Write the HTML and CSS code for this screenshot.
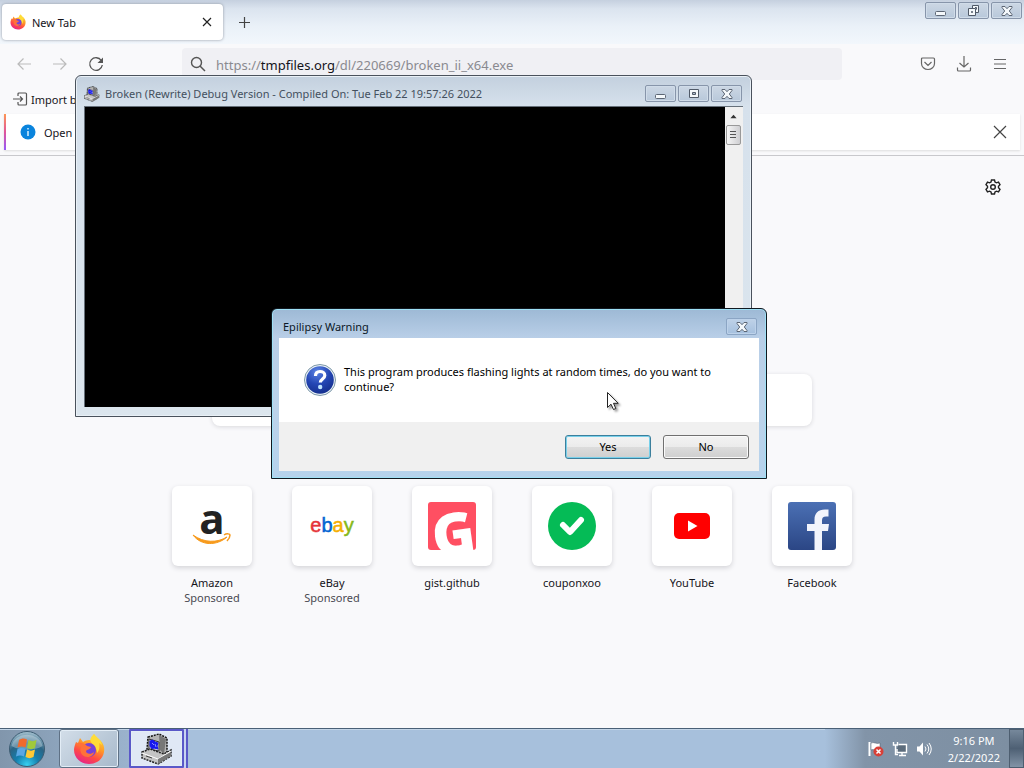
FILE: index.html
```html
<!DOCTYPE html>
<html lang="en">
<head>
<meta charset="utf-8">
<title>New Tab</title>
<link rel="stylesheet" href="styles.css">
</head>
<body>
<svg class="defs" aria-hidden="true">
  <defs>
    <linearGradient id="fox" x1="0.8" y1="0" x2="0.3" y2="1"><stop offset="0" stop-color="#ffe03a"/><stop offset=".4" stop-color="#ff9a28"/><stop offset=".7" stop-color="#ff4a45"/><stop offset="1" stop-color="#e5238b"/></linearGradient>
    <linearGradient id="blue" x1="0" y1="0" x2="0" y2="1"><stop offset="0" stop-color="#4b70b4"/><stop offset="1" stop-color="#2b4685"/></linearGradient>
    <radialGradient id="orb" cx=".5" cy=".95" r=".95"><stop offset="0" stop-color="#38d0f0"/><stop offset=".35" stop-color="#147fae"/><stop offset=".65" stop-color="#2b6484"/><stop offset="1" stop-color="#a8c4d2"/></radialGradient>
    <radialGradient id="ask" cx=".4" cy=".2" r=".9"><stop offset="0" stop-color="#5c84e4"/><stop offset=".5" stop-color="#2446b4"/><stop offset="1" stop-color="#122a86"/></radialGradient>
    <symbol id="firefox" viewBox="0 0 32 32">
      <path d="M3 9l2 1 2-5 3 4c3-2 6-2 8-2l3-6c2 2 2 4 3 5l3 1c3 3 5 7 4 12-1 7-7 12-15 12S1 25 1 17c0-3 1-5 2-8z" fill="url(#fox)"/>
      <path d="M21 1c3 4 7 5 8 11l-3-2c1 5 0 8-2 10 0-6-4-7-6-11-2-3 1-6 3-8z" fill="#ffdc38"/>
      <circle cx="16" cy="17" r="7" fill="#7542d9"/>
      <path d="M5 10c4-1 7 1 9 3l4 1c-1 3-4 2-5 4 0 3 5 4 8 1-1 6-10 7-13 1-1-3-1-5 1-7-2 0-3 0-4-3z" fill="#ff7139"/>
    </symbol>
    <symbol id="computer" viewBox="0 0 32 32">
      <path d="M7 4l11-3 8 4v14l-3 3-14-2-3-4z" fill="#b4b4b4" stroke="#111" stroke-width="1.500" stroke-dasharray="2 1"/>
      <path d="M18 2l7 4-2 15-4-4z" fill="#777"/>
      <path d="M8 6l10 3v9L8 16z" fill="#d8d8ea" stroke="#333"/>
      <path d="M9 8l3-1 2 2 3 1-1 3 1 3-4-1-2 1-2-3z" fill="#1818ee" stroke="#1818ee"/>
      <path d="M11 10l2 2m1-1l1 3" stroke="#8890ff"/>
      <path d="M1 19l8-3 14 5 7-4v6L17 31 1 25z" fill="#c4c4c4" stroke="#222" stroke-width="1.500" stroke-dasharray="2 1"/>
      <path d="M1 20l16 6 13-8" fill="none" stroke="#fff"/>
      <path d="M17 26v5l13-8v-4z" fill="#777"/>
      <path d="M5 23l6 2" stroke="#444"/>
    </symbol>
    <symbol id="cap-min" viewBox="0 0 14 12"><rect x="1.500" y="6.500" width="10" height="4" rx="1" fill="#f4f8fb" stroke="#5c6674"/></symbol>
    <symbol id="cap-max" viewBox="0 0 14 12"><path d="M2.500 1.500h9v8h-9z" fill="#f4f8fb" stroke="#505a68"/><path d="M5.500 4.500h3v2h-3z" fill="#aebccd" stroke="#505a68"/></symbol>
    <symbol id="cap-restore" viewBox="0 0 14 12"><path d="M5.500.5h6v7h-6z" fill="#f4f8fb" stroke="#505a68"/><path d="M1.500 3.500h7v7h-7z" fill="#f4f8fb" stroke="#505a68"/><path d="M4.500 6.500h1v1h-1z" fill="none" stroke="#505a68"/><path d="M8 2.500h1.500v2" fill="none" stroke="#505a68"/></symbol>
    <symbol id="cap-close" viewBox="0 0 14 12"><path d="M2 1.500h3l2 2.200 2-2.200h3v1L9.300 6l2.700 3.500v1H9L7 8.300 5 10.500H2v-1L4.700 6 2 2.500z" fill="#f4f8fb" stroke="#5c6674"/></symbol>
    <symbol id="cross" viewBox="0 0 16 16"><path d="M2 2l12 12M14 2L2 14" fill="none" stroke="currentColor" stroke-width="1.200"/></symbol>
    <symbol id="tab-cross" viewBox="0 0 10 10"><path d="M1 1l8 8M9 1L1 9" fill="none" stroke="#222" stroke-width="1.200"/></symbol>
  </defs>
</svg>

<main class="browser">
  <header class="tabstrip">
    <div class="tab">
      <svg class="i16"><use href="#firefox"/></svg>
      <span class="tab-title">New Tab</span>
      <button class="plain" aria-label="Close tab"><svg class="i10"><use href="#tab-cross"/></svg></button>
    </div>
    <button class="plain" aria-label="Open a new tab"><svg class="i13" viewBox="0 0 13 13"><path d="M6.500 1v11M1 6.500h11" stroke="#444" stroke-width="1.200"/></svg></button>
    <div class="captions">
      <button class="cap" aria-label="Minimize"><svg><use href="#cap-min"/></svg></button>
      <button class="cap" aria-label="Restore"><svg><use href="#cap-restore"/></svg></button>
      <button class="cap" aria-label="Close"><svg><use href="#cap-close"/></svg></button>
    </div>
  </header>

  <nav class="toolbar">
    <button class="plain dim" aria-label="Back"><svg class="i16" viewBox="0 0 16 16"><path d="M15 8H2M7.500 2.500L2 8l5.500 5.500" fill="none" stroke="currentColor" stroke-width="1.200"/></svg></button>
    <button class="plain dim" aria-label="Forward"><svg class="i16" viewBox="0 0 16 16"><path d="M1 8h13M8.500 2.500L14 8l-5.500 5.500" fill="none" stroke="currentColor" stroke-width="1.200"/></svg></button>
    <button class="plain" aria-label="Reload"><svg class="i16" viewBox="0 0 16 16"><path d="M13.300 4.500A6.300 6.300 0 1 0 14.300 9" fill="none" stroke="#555" stroke-width="1.300"/><path d="M15 1.500v5.500H9.500z" fill="#555"/></svg></button>
    <div class="urlbar">
      <svg class="i16" viewBox="0 0 16 16"><circle cx="6.500" cy="6.500" r="5" fill="none" stroke="#555" stroke-width="1.400"/><path d="M10 10l5 5" stroke="#555" stroke-width="1.500"/></svg>
      <span class="url">https://<b>tmpfiles.org</b>/dl/220669/broken_ii_x64.exe</span>
    </div>
    <div class="tools">
      <button class="plain" aria-label="Pocket"><svg class="i16" viewBox="0 0 16 16"><path d="M2.500 2h11c.7 0 1 .4 1 1v4.500a6.500 6 0 0 1-13 0V3c0-.6.300-1 1-1zM4.500 6L8 9.500 11.500 6" fill="none" stroke="#666" stroke-width="1.200"/></svg></button>
      <button class="plain" aria-label="Downloads"><svg class="i16" viewBox="0 0 16 16"><path d="M8 0v11M3.500 7L8 11l4.500-4M1.500 11.500V14c0 .6.400 1 1 1h11c.6 0 1-.4 1-1v-2.500" fill="none" stroke="#666" stroke-width="1.200"/></svg></button>
      <button class="plain" aria-label="Menu"><svg class="i16" viewBox="0 0 16 16"><path d="M2 3.500h12M2 8h12M2 12.500h12" stroke="#666" stroke-width="1.200"/></svg></button>
    </div>
  </nav>

  <div class="bookmarks">
    <svg class="i16" viewBox="0 0 16 16"><path d="M6 5V3c0-.6.400-1 1-1h6.500c.6 0 1 .4 1 1v10c0 .6-.4 1-1 1H7c-.6 0-1-.4-1-1v-2M1 8h9.500M8 5.500L10.500 8 8 10.500" fill="none" stroke="#555" stroke-width="1.200"/></svg>
    <a class="bookmark" href="#">Import b</a>
  </div>

  <div class="notice">
    <svg class="i16" viewBox="0 0 16 16"><circle cx="8" cy="8" r="7.500" fill="#0a84dd"/><path d="M8 4v1.500M8 7v5" stroke="#d8f0ff" stroke-width="1.500"/></svg>
    <span class="notice-text">Open</span>
    <button class="plain" aria-label="Close notification"><svg class="i16"><use href="#cross"/></svg></button>
  </div>

  <section class="page">
    <button class="plain gear" aria-label="Personalize new tab"><svg class="i16" viewBox="0 0 16 16"><path d="M6.500 1h3l.5 2 1.500.8 2-.7 1.500 2.600L13.500 7.200v1.600L15 10.300l-1.500 2.600-2-.7-1.500.8-.5 2h-3L6 13l-1.500-.8-2 .7L1 10.300l1.500-1.500V7.200L1 5.700l1.500-2.600 2 .7L6 3z" fill="none" stroke="#222" stroke-width="1.400"/><circle cx="8" cy="8" r="2.300" fill="none" stroke="#222" stroke-width="1.400"/></svg></button>
    <input class="search" type="search" aria-label="Search the web">
    <div class="tiles">
      <a class="tile" href="#"><span class="card"><svg class="i48" viewBox="0 0 48 48"><text x="24" y="32" class="amazon">a</text><path d="M5 33c11 8 24 8 34 2-10 9-26 9-34-2z" fill="#f79a1c" stroke="#f79a1c"/><path d="M36 33c3-2 6-1 6 0s-1 4-3 6" fill="none" stroke="#f79a1c" stroke-width="1.500"/></svg></span><span>Amazon</span><small>Sponsored</small></a>
      <a class="tile" href="#"><span class="card"><svg class="i48" viewBox="0 0 48 48"><text x="24" y="30" class="ebay"><tspan class="e">e</tspan><tspan class="b">b</tspan><tspan class="a">a</tspan><tspan class="y">y</tspan></text></svg></span><span>eBay</span><small>Sponsored</small></a>
      <a class="tile" href="#"><span class="card"><svg class="i48" viewBox="0 0 48 48"><rect width="48" height="48" rx="3" fill="#ff4f62"/><text x="25" y="53" class="gist" transform="rotate(-8 24 30)">G</text></svg></span><span>gist.github</span></a>
      <a class="tile" href="#"><span class="card"><svg class="i48" viewBox="0 0 48 48"><circle cx="24" cy="24" r="24" fill="#05bb56"/><path d="M15 23l7 7 11-12" fill="none" stroke="#fff" stroke-width="6" stroke-linecap="round" stroke-linejoin="round"/></svg></span><span>couponxoo</span></a>
      <a class="tile" href="#"><span class="card"><svg class="i48" viewBox="0 0 48 48"><rect x="6" y="11" width="36" height="26" rx="5" fill="#f00"/><path d="M20 18.500v11l9.500-5.500z" fill="#fff"/></svg></span><span>YouTube</span></a>
      <a class="tile" href="#"><span class="card"><svg class="i48" viewBox="0 0 48 48"><rect width="48" height="48" rx="3" fill="url(#blue)"/><path d="M40.500 7.500H37c-7 0-10.500 4-10.500 10V22H19v7h7.500v19H34V29h6l1-7h-7v-3.500c0-2.500 1-4 4-4h2.500z" fill="#f2f4fc"/></svg></span><span>Facebook</span></a>
    </div>
  </section>
</main>

<section class="window console" aria-label="Console">
  <header class="titlebar">
    <svg class="i16"><use href="#computer"/></svg>
    <h1>Broken (Rewrite) Debug Version - Compiled On: Tue Feb 22 19:57:26 2022</h1>
    <div class="captions">
      <button class="cap" aria-label="Minimize"><svg><use href="#cap-min"/></svg></button>
      <button class="cap" aria-label="Maximize"><svg><use href="#cap-max"/></svg></button>
      <button class="cap" aria-label="Close"><svg><use href="#cap-close"/></svg></button>
    </div>
  </header>
  <div class="terminal">
    <div class="scrollbar">
      <svg class="arrow" viewBox="0 0 17 17"><path d="M5 11l3.500-4 3.500 4z" fill="#333"/></svg>
      <div class="thumb"><svg viewBox="0 0 9 10"><path d="M1 1.500h6M1 4.500h6M1 7.500h6" stroke="#555"/></svg></div>
    </div>
  </div>
</section>

<section class="window dialog" role="dialog" aria-labelledby="dialog-title">
  <header class="titlebar">
    <h1 id="dialog-title">Epilipsy Warning</h1>
    <button class="cap" aria-label="Close"><svg><use href="#cap-close"/></svg></button>
  </header>
  <div class="message">
    <svg class="i32" viewBox="0 0 32 32"><circle cx="16" cy="16" r="15.500" fill="#e8f0f5" stroke="#7d97a9"/><circle cx="16" cy="16" r="13.800" fill="url(#ask)"/><path d="M11.500 12c0-3 2-4.500 4.500-4.500s4.800 1.500 4.800 4c0 3.500-4.500 3.500-4.500 7" fill="none" stroke="#fff" stroke-width="3.200"/><circle cx="16.200" cy="23" r="2.200" fill="#bfe4ff"/></svg>
    <p>This program produces flashing lights at random times, do you want to continue?</p>
  </div>
  <footer class="actions">
    <button class="push default">Yes</button>
    <button class="push">No</button>
  </footer>
</section>

<svg class="cursor" viewBox="0 0 14 20" aria-hidden="true"><path d="M1.500 1.500v15l3.500-3.300 2.500 5.300 2.300-1-2.300-5.200h4.700z" fill="#fff" stroke="#222"/></svg>

<footer class="taskbar">
  <button class="start" aria-label="Start"><svg viewBox="0 0 38 38"><circle cx="19" cy="19" r="17.500" fill="url(#orb)" stroke="#3d5c72"/><path d="M3.500 16a16 15 0 0 1 31 0c-8 5-22 5-31 0z" fill="#fff" opacity=".3"/><path d="M11 10c3-2 5-2 8-.5l-1.500 8c-3-1.500-5-1.500-8 0z" fill="#ef6a2d"/><path d="M20.500 10c3 1.500 5 1.500 8 0l-1.500 8c-3 1.500-5 1.500-8 0z" fill="#a0c93c"/><path d="M9.500 19c3-1.500 5-1.500 8 0L16 26.500c-3-1.500-5-1.500-8 0z" fill="#5aa7e4"/><path d="M19 19.500c3 1.500 5 1.500 8 0L25.500 27c-3 1.500-5 1.500-8 0z" fill="#fdc936"/></svg></button>
  <button class="task" aria-label="Firefox"><svg class="i32"><use href="#firefox"/></svg></button>
  <div class="group"><button class="task attention" aria-label="Console"><svg class="i32"><use href="#computer"/></svg></button></div>
  <div class="tray">
    <svg class="i16" viewBox="0 0 16 16"><path d="M1.500 1v14" stroke="#fff" stroke-width="2"/><path d="M3 2c3-1.500 5 1.500 9 0v7c-4 1.500-6-1.500-9 0z" fill="#fff" stroke="#4a5a6a" stroke-width=".5"/><circle cx="10.500" cy="10.500" r="5" fill="#d84038"/><path d="M8.500 8.500l4 4m0-4l-4 4" stroke="#fff" stroke-width="1.500"/></svg>
    <svg class="i16" viewBox="0 0 16 16"><path d="M6.500 3.500h8v8H5V8" fill="#5c6c7c" stroke="#fff" stroke-width="1.400"/><path d="M7 14.500h7M10 12v2M1.500 1v3h4V1M3.500 4v9.500H6" fill="none" stroke="#fff" stroke-width="1.400"/></svg>
    <svg class="i16" viewBox="0 0 16 16"><path d="M1 5.500h2.500L7 1.500v13l-3.500-4H1z" fill="#fff"/><path d="M9 5.500q2 2.500 0 5M11 3.500q3.500 4.500 0 9M13 2q4.500 6 0 12" fill="none" stroke="#fff"/></svg>
    <time class="clock"><span>9:16 PM</span><span>2/22/2022</span></time>
  </div>
  <button class="peek" aria-label="Show desktop"></button>
</footer>
</body>
</html>
```
FILE: styles.css
```css
* { box-sizing: border-box; }

body {
  margin: 0;
  height: 100vh;
  display: flex;
  flex-direction: column;
  overflow: hidden;
  position: relative;
  font: 12px/15px "Noto Sans", "Open Sans", sans-serif;
  color: #15141a;
  background: #f9f9fb;
}

.defs { position: absolute; width: 0; height: 0; }
svg { display: block; flex: none; }
.i10 { width: 10px; height: 10px; }
.i13 { width: 13px; height: 13px; }
.i16 { width: 16px; height: 16px; }
.i32 { width: 32px; height: 32px; }
.i48 { width: 48px; height: 48px; overflow: visible; }

button { font: inherit; color: inherit; }
.plain { padding: 0; border: 0; background: none; color: #444; }
.dim { color: #bbb; }
a { color: inherit; text-decoration: none; }
h1, p { margin: 0; font: inherit; }

.browser { flex: 1; display: flex; flex-direction: column; min-height: 0; }

.tabstrip {
  display: flex;
  align-items: center;
  gap: 15px;
  height: 44px;
  padding: 0 2px;
  background: linear-gradient(#c5d0df, #dbe4ef 20%, #eaf1f8 60%, #f2f7fc);
}
.tab {
  display: flex;
  align-items: center;
  gap: 6px;
  width: 221px;
  height: 36px;
  padding: 0 11px 0 8px;
  border-radius: 4px;
  background: #fff;
  box-shadow: 0 0 3px #8d94a0;
}
.tab-title { flex: 1; font-size: 11px; }

.captions { display: flex; gap: 2px; margin-left: auto; }
.tabstrip .captions { align-self: flex-start; padding-top: 2px; }
.cap {
  display: grid;
  place-items: center;
  width: 31px;
  height: 17px;
  padding: 0;
  border: 1px solid #8795aa;
  border-radius: 2px;
  background: linear-gradient(#ccd7e4, #b8c8da);
  box-shadow: inset 0 0 0 1px #d0dce9;
}
.cap svg { width: 14px; height: 12px; }

.toolbar {
  display: flex;
  align-items: center;
  gap: 20px;
  height: 40px;
  padding: 0 16px;
}
.urlbar {
  flex: 1;
  display: flex;
  align-items: center;
  gap: 10px;
  height: 32px;
  max-width: 660px;
  margin-left: 58px;
  padding-left: 8px;
  border-radius: 4px;
  background: #f0f0f4;
}
.url { padding-top: 2px; font-size: 13px; line-height: 20px; color: #8a8a90; }
.url b { font-weight: 400; color: #15141a; }
.tools { display: flex; gap: 20px; margin-left: auto; }

.bookmarks { display: flex; align-items: center; gap: 3px; height: 30px; padding-left: 12px; font-size: 11px; }
.bookmark { white-space: nowrap; }

.notice {
  display: flex;
  align-items: center;
  gap: 8px;
  height: 36px;
  margin: 0 4px;
  padding: 0 12px 0 14px;
  border-left: 2px solid;
  border-image: linear-gradient(#ff9a50, #e0559a, #9059ff) 1;
  background: #fff;
  box-shadow: 0 1px 2px #ddd;
  font-size: 11px;
}
.notice-text { flex: 1; }

.page {
  flex: 1;
  display: flex;
  flex-direction: column;
  align-items: center;
  margin-top: 5px;
  border-top: 1px solid #c8c8cc;
}
.gear { align-self: flex-end; margin: 23px 23px 0 0; }
.search {
  width: 600px;
  max-width: 90%;
  height: 52px;
  margin-top: 179px;
  border: 0;
  border-radius: 8px;
  background: #fff;
  box-shadow: 0 1px 4px #d8d8dc;
}
.tiles { display: flex; gap: 40px; margin-top: 60px; }
.tile { display: flex; flex-direction: column; align-items: center; width: 80px; font-size: 11px; }
.card {
  display: grid;
  place-items: center;
  width: 80px;
  height: 80px;
  margin-bottom: 9px;
  border-radius: 6px;
  background: #fff;
  box-shadow: 0 2px 5px #d4d4d8;
}
.tile small { font-size: 11px; color: #4a4a52; }
.amazon { font: 700 42px "Open Sans", sans-serif; text-anchor: middle; fill: #222; }
.ebay { font: 20px "Liberation Sans", sans-serif; text-anchor: middle; stroke-width: 0.5px; }
.ebay .e { fill: #e53238; stroke: #e53238; }
.ebay .b { fill: #0064d2; stroke: #0064d2; }
.ebay .a { fill: #f5af02; stroke: #f5af02; }
.ebay .y { fill: #86b817; stroke: #86b817; }
.gist { font: 800 58px "Open Sans", sans-serif; text-anchor: middle; fill: #fff; }

.window { position: absolute; display: flex; flex-direction: column; border-radius: 6px 6px 0 0; }
.titlebar { display: flex; align-items: center; font-size: 11px; }

.console {
  left: 75px;
  top: 75px;
  width: 677px;
  height: 342px;
  padding: 0 8px 9px;
  border: 1px solid #4a525c;
  background: linear-gradient(#c3d0de, #d6e1ec 30px, #dce6ee);
  box-shadow: inset 0 0 0 1px #e9f0f6;
}
.console .titlebar { gap: 5px; height: 30px; padding: 5px 1px 0 0; color: #44505e; }
.terminal {
  flex: 1;
  display: flex;
  justify-content: flex-end;
  border: 1px solid #66707a;
  border-width: 1px 0 0 1px;
  background: #000;
}
.scrollbar { width: 18px; padding: 0 2px 0 1px; background: #f0f0f0; }
.arrow { width: 15px; height: 18px; }
.thumb {
  display: grid;
  place-items: center;
  height: 20px;
  border: 1px solid #999;
  border-radius: 2px;
  background: linear-gradient(90deg, #f6f6f6, #cfcfd2);
}
.thumb svg { width: 9px; height: 10px; }

.dialog {
  left: 271px;
  top: 308px;
  width: 496px;
  padding: 0 7px;
  padding-bottom: 7px;
  border: 1px solid #101820;
  background: linear-gradient(#9db9d5, #b8cee7 28px, #bcd3ea 60%, #b5d2ec);
  box-shadow: inset 0 0 0 1px #9fe0f5;
}
.dialog .titlebar { justify-content: space-between; height: 29px; padding: 6px 2px 0 4px; color: #0b1726; }
.dialog .cap { background: linear-gradient(#bfd2e8, #a5c0de); border-color: #8ba5c4; box-shadow: inset 0 0 0 1px #bdd2ea; }
.message {
  display: flex;
  align-items: flex-start;
  gap: 8px;
  height: 84px;
  padding: 26px 25px;
  background: #fff;
  color: #000;
  font-size: 11px;
}
.actions {
  display: flex;
  justify-content: flex-end;
  align-items: center;
  gap: 12px;
  height: 49px;
  padding: 0 10px;
  background: #f0f0f0;
}
.push {
  width: 86px;
  height: 24px;
  padding: 0;
  border: 1px solid #707070;
  border-radius: 3px;
  background: linear-gradient(#f3f3f3, #ebebeb 50%, #dcdcdc 50%, #cfcfcf);
  box-shadow: inset 0 0 0 1px #fafafa;
  color: #000;
  font-size: 11px;
}
.push.default { border-color: #3c7f9c; box-shadow: inset 0 0 0 1px #78d0ea; }

.cursor { position: absolute; left: 606px; top: 391px; width: 14px; height: 20px; filter: drop-shadow(2px 2px 1px #0006); }

.taskbar {
  display: flex;
  align-items: stretch;
  height: 40px;
  border-top: 1px solid #4a6076;
  box-shadow: inset 0 1px #c4d6e8;
  background: linear-gradient(90deg, #8196ac, #8da4bc 60px, #a7c0dc 190px);
}
.start { padding: 0 8px; border: 0; background: none; }
.start svg { width: 38px; height: 38px; }
.task {
  display: grid;
  place-items: center;
  width: 60px;
  height: 39px;
  margin-left: 5px;
  padding: 0;
  border: 1px solid #5f7185;
  border-radius: 3px;
  background: linear-gradient(135deg, #d3dee9, #a7b9cb);
  box-shadow: inset 0 0 0 1px #e3edf6;
}
.group { display: flex; margin-left: 10px; border-right: 2px solid #5a58c8; padding-right: 2px; background: #c9d4f0; }
.attention { width: 55px; margin: 0; border: 2px solid #5a58c8; border-radius: 1px; background: #e0e8f5; }
.tray {
  display: flex;
  align-items: center;
  gap: 8px;
  margin-left: auto;
  padding: 0 9px 0 43px;
  background: linear-gradient(90deg, #a7c0dc, #8294a8 40px, #7d8fa2);
}
.clock { display: flex; flex-direction: column; align-items: center; margin-left: 8px; font-size: 11px; line-height: 17px; color: #fff; }
.peek { width: 15px; padding: 0; border: 1px solid #4d5e70; background: linear-gradient(#76889b, #4e6074 50%, #8293a6); }
```
